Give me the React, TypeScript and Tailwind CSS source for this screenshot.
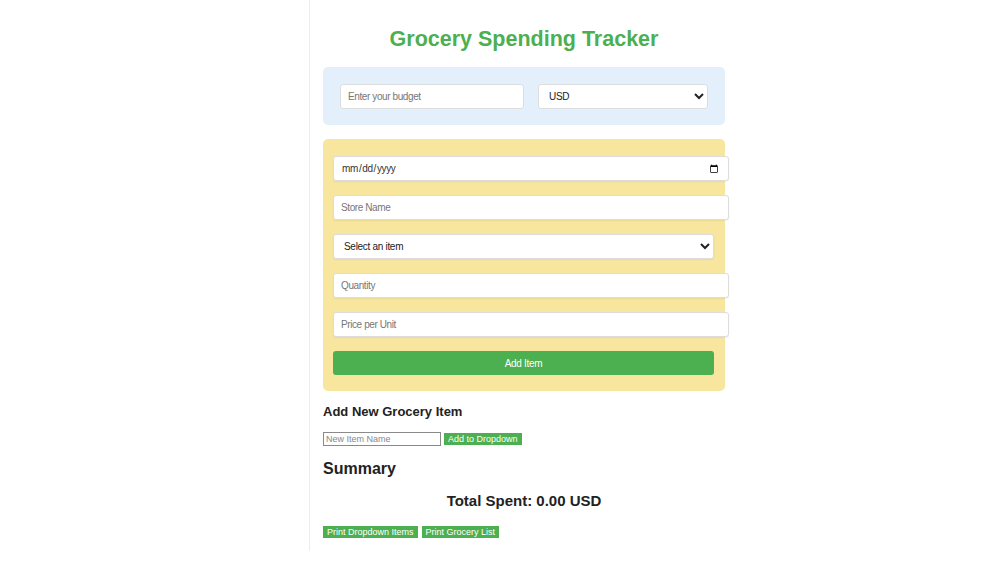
import React, { useState } from 'react';

const App: React.FC = () => {
  const [budget, setBudget] = useState('');
  const [currency, setCurrency] = useState('USD');
  const [items, setItems] = useState<string[]>([]);
  const [newItem, setNewItem] = useState('');

  const addToDropdown = () => {
    if (newItem.trim()) {
      setItems(prev => [...prev, newItem.trim()]);
      setNewItem('');
    }
  };

  const inputCls =
    'block h-[25px] w-[396px] rounded-[3px] border border-[#ddd] bg-white px-[7px] text-[10px] tracking-[-0.4px] text-[#333] shadow-[0_1px_2px_rgba(0,0,0,0.06)] placeholder:text-[#777] outline-none';
  const selectCls =
    'block h-[25px] w-[381px] rounded-[3px] border border-[#ddd] bg-white px-[6px] text-[10px] tracking-[-0.3px] text-[#222] shadow-[0_1px_2px_rgba(0,0,0,0.06)] outline-none';
  const smallBtn = 'h-[12px] bg-[#4caf50] px-[4px] text-[9px] leading-[12px] text-white';

  return (
    <div className="min-h-screen w-full bg-white font-['Liberation_Sans',Arial,sans-serif] text-[#333]">
      <div className="ml-[309px] w-[429px] border-l border-[#ececec] px-[13px] pt-[26px] pb-[13px]">
        {/* TITLE */}
        <h1 className="text-center text-[21.5px] font-bold leading-[26px] text-[#4caf50]">
          Grocery Spending Tracker
        </h1>

        {/* BUDGET */}
        <div className="mt-[15px] flex h-[58px] items-center gap-[14px] rounded-[5px] bg-[#e3f0fb] px-[17px]">
          <input
            type="text"
            value={budget}
            onChange={e => setBudget(e.target.value)}
            placeholder="Enter your budget"
            className="h-[25px] w-[184px] rounded-[3px] border border-[#ddd] bg-white px-[7px] text-[10px] tracking-[-0.4px] placeholder:text-[#777] outline-none"
          />
          <select
            value={currency}
            onChange={e => setCurrency(e.target.value)}
            className="h-[25px] flex-1 rounded-[3px] border border-[#ddd] bg-white px-[6px] text-[10px] tracking-[-0.3px] text-[#222] outline-none"
          >
            <option>USD</option>
            <option>EUR</option>
            <option>GBP</option>
          </select>
        </div>

        {/* ITEM FORM */}
        <div className="mt-[14px] flex flex-col gap-[14px] rounded-[5px] bg-[#f8e69f] px-[10px] pt-[17px] pb-[16px]">
          <input type="date" className={`${inputCls} text-[9px] tracking-[-0.2px]`} />
          <input type="text" placeholder="Store Name" className={inputCls} />
          <select className={selectCls} defaultValue="">
            <option value="">Select an item</option>
            {items.map(i => (
              <option key={i} value={i}>{i}</option>
            ))}
          </select>
          <input type="text" placeholder="Quantity" className={inputCls} />
          <input type="text" placeholder="Price per Unit" className={inputCls} />
          <button className="h-[24px] w-[381px] rounded-[3px] bg-[#4caf50] text-[10px] tracking-[-0.3px] text-white">
            Add Item
          </button>
        </div>

        {/* NEW ITEM */}
        <h2 className="mt-[12px] text-[13px] font-bold leading-[17px] text-[#222]">
          Add New Grocery Item
        </h2>
        <div className="mt-[12px] flex items-center gap-[3px]">
          <input
            type="text"
            value={newItem}
            onChange={e => setNewItem(e.target.value)}
            placeholder="New Item Name"
            className="h-[14px] w-[118px] border border-[#8a8a8a] bg-white px-[2px] text-[9px] placeholder:text-[#888] outline-none"
          />
          <button onClick={addToDropdown} className={smallBtn}>
            Add to Dropdown
          </button>
        </div>

        {/* SUMMARY */}
        <h2 className="mt-[13px] text-[16px] font-bold leading-[20px] text-[#222]">Summary</h2>
        <p className="mt-[12px] text-center text-[15px] font-bold leading-[20px] text-[#222]">
          Total Spent: 0.00 {currency}
        </p>
        <div className="mt-[15px] flex gap-[4px]">
          <button className={smallBtn}>Print Dropdown Items</button>
          <button className={smallBtn}>Print Grocery List</button>
        </div>
      </div>
    </div>
  );
};

export default App;
